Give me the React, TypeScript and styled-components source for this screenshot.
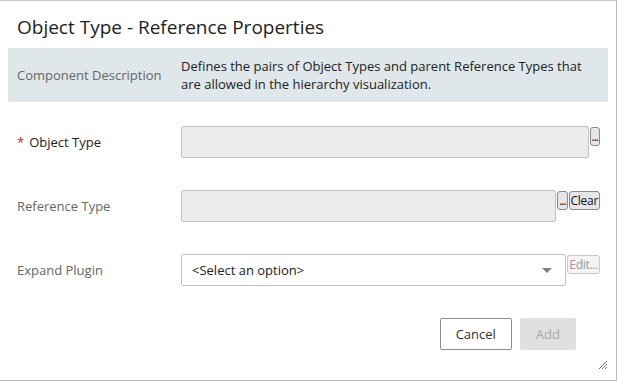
import styled, { createGlobalStyle } from 'styled-components';

const GlobalStyle = createGlobalStyle`
  html, body {
    margin: 0;
    padding: 0;
    background: #ffffff;
  }
  * {
    box-sizing: border-box;
  }
`;

const FONT = `"Open Sans", "Noto Sans", "Liberation Sans", sans-serif`;

export default function App() {
  return (
    <>
      <GlobalStyle />
      <Dialog>
        <Title>Object Type - Reference Properties</Title>
        <DescPanel>
          <DescLabel>Component Description</DescLabel>
          <DescText>
            Defines the pairs of Object Types and parent Reference Types that
            are allowed in the hierarchy visualization.
          </DescText>
        </DescPanel>

        <Form>
          <FieldRow>
            <FieldLabel $required>
              <Star>*</Star>Object Type
            </FieldLabel>
            <Controls>
              <TextBox />
              <MiniButton $dots>...</MiniButton>
            </Controls>
          </FieldRow>

          <FieldRow>
            <FieldLabel>Reference Type</FieldLabel>
            <Controls>
              <TextBox />
              <MiniButton $dots>...</MiniButton>
              <MiniButton>Clear</MiniButton>
            </Controls>
          </FieldRow>

          <FieldRow>
            <FieldLabel>Expand Plugin</FieldLabel>
            <Controls>
              <Select>
                <span>&lt;Select an option&gt;</span>
                <Caret />
              </Select>
              <MiniButton $disabled>Edit...</MiniButton>
            </Controls>
          </FieldRow>
        </Form>

        <Footer>
          <Button>Cancel</Button>
          <Button $primaryDisabled>Add</Button>
        </Footer>

        <Grip viewBox="0 0 12 12">
          <path d="M11 3 L3 11 M11 6 L6 11 M11 9 L9 11" stroke="#777" strokeWidth="1" fill="none" />
        </Grip>
      </Dialog>
    </>
  );
}

const Dialog = styled.div`
  position: relative;
  width: 617px;
  height: 381px;
  background: #ffffff;
  border-top: 1px solid #c6c6c6;
  border-right: 1px solid #b8b8b8;
  border-bottom: 1px solid #b8b8b8;
  font-family: ${FONT};
  color: #222;
`;

const Title = styled.h1`
  margin: 0;
  padding: 12px 17px 0;
  height: 47px;
  font-size: 19px;
  font-weight: 400;
  line-height: 28px;
  color: #1e1e1e;
`;

const DescPanel = styled.div`
  margin: 0 8px;
  height: 54px;
  background: #dfe7ea;
  display: grid;
  grid-template-columns: 164px 1fr;
  align-items: center;
  padding: 0 20px 0 9px;
`;

const DescLabel = styled.div`
  font-size: 13px;
  color: #666;
`;

const DescText = styled.div`
  font-size: 13px;
  line-height: 18px;
  color: #222;
`;

const Form = styled.div`
  padding: 24px 0 0 17px;
  display: flex;
  flex-direction: column;
  gap: 32px;
`;

const FieldRow = styled.div`
  display: grid;
  grid-template-columns: 164px 1fr;
  align-items: center;
  height: 32px;
`;

const FieldLabel = styled.div<{ $required?: boolean }>`
  font-size: 13px;
  color: ${(p) => (p.$required ? '#1e1e1e' : '#666')};
`;

const Star = styled.span`
  color: #c0281e;
  margin-right: 5px;
`;

const Controls = styled.div`
  display: flex;
  align-items: flex-start;
  height: 32px;
  padding-right: 16px;
`;

const TextBox = styled.div`
  flex: 1;
  height: 32px;
  background: #ececec;
  border: 1px solid #c2c2c2;
  border-radius: 2px;
`;

const MiniButton = styled.div<{ $disabled?: boolean; $dots?: boolean }>`
  margin-top: 1px;
  margin-left: 1px;
  height: 19px;
  padding: 0 1px;
  display: flex;
  align-items: center;
  font-size: 12px;
  line-height: 1;
  letter-spacing: ${(p) => (p.$dots ? '-1px' : '-0.3px')};
  color: ${(p) => (p.$disabled ? '#9a9a9a' : '#111')};
  background: ${(p) => (p.$disabled ? '#f4f4f4' : '#e6e6ea')};
  border: 1px solid ${(p) => (p.$disabled ? '#c8c8c8' : '#8a8a8e')};
  border-radius: 3px;
`;

const Select = styled.div`
  flex: 1;
  height: 32px;
  background: #ffffff;
  border: 1px solid #c2c2c2;
  border-radius: 2px;
  display: flex;
  align-items: center;
  justify-content: space-between;
  padding: 0 13px 0 10px;
  font-size: 13px;
  color: #222;
`;

const Caret = styled.span`
  width: 0;
  height: 0;
  border-left: 5px solid transparent;
  border-right: 5px solid transparent;
  border-top: 5px solid #808080;
`;

const Footer = styled.div`
  display: flex;
  justify-content: flex-end;
  gap: 8px;
  padding: 32px 40px 0 0;
`;

const Button = styled.div<{ $primaryDisabled?: boolean }>`
  height: 32px;
  padding: 0 15px;
  display: flex;
  align-items: center;
  justify-content: center;
  font-size: 13px;
  color: ${(p) => (p.$primaryDisabled ? '#a8a8a8' : '#333')};
  background: ${(p) => (p.$primaryDisabled ? '#e0e0e0' : '#ffffff')};
  border: 1px solid ${(p) => (p.$primaryDisabled ? '#e0e0e0' : '#8c8c8c')};
  border-radius: 2px;
`;

const Grip = styled.svg`
  position: absolute;
  right: 8px;
  bottom: 10px;
  width: 12px;
  height: 12px;
`;
